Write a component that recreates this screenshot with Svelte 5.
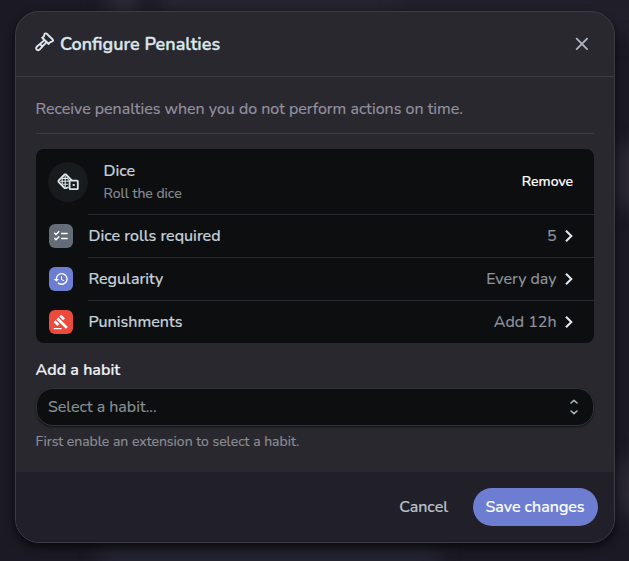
<script>
  const rows = [
    { id: 'rolls', label: 'Dice rolls required', value: '5', tone: '#636c77' },
    { id: 'time', label: 'Regularity', value: 'Every day', tone: '#6d7dd1' },
    { id: 'gavel', label: 'Punishments', value: 'Add 12h', tone: '#eb4b3d' }
  ];
</script>

<main class="backdrop">
  <i class="glow g1"></i><i class="glow g2"></i><i class="glow g3"></i>
  <i class="glow g4"></i><i class="glow g5"></i><i class="glow g6"></i>
  <section class="modal" role="dialog" aria-labelledby="title">
    <header>
      <svg class="hammer" width="20" height="20" viewBox="0 0 20 20" fill="none" stroke="currentColor" stroke-width="1.9" stroke-linejoin="round" stroke-linecap="round">
        <path d="M9.5 2.2Q10.6.8 11.8 1.8L17.7 7.5Q18.7 8.7 17.3 9.3L14.8 10.3 13.7 12 7.2 5.7 8.8 4.6Z" />
        <path d="M8.6 8.9 2 14.5Q.3 16.4 1.9 17.7 3.5 19 5 17.2L10.8 10.9M5.7 12.7l1.8 1.5" />
      </svg>
      <h1 id="title">Configure Penalties</h1>
      <button class="close" aria-label="Close">
        <svg width="14" height="14" viewBox="0 0 14 14" fill="none" stroke="currentColor" stroke-width="1.9"><path d="m1.2 1.2 11.4 11.4M12.6 1.2 1.2 12.6" /></svg>
      </button>
    </header>
    <div class="body">
      <p class="intro">Receive penalties when you do not perform actions on time.</p>
      <div class="card">
        <div class="top">
          <div class="avatar">
            <svg width="22" height="18" viewBox="0 0 22 18" fill="none" stroke="currentColor">
              <path stroke-width="1.8" stroke-linejoin="round" d="M11.5 14 8.9 15.2 7.6 15 1.5 8.9 1.5 7.7 7.6 1.5 8.9 1.5 14.8 7.4" />
              <path stroke-width="1.1" d="M8.2 3v11M2.8 8.3h9M5.2 5.4h6M5.2 11.2h6M5.2 5.4v5.8M11.2 5.4v3" />
              <rect x="12.6" y="7.6" width="8.2" height="8.6" rx=".7" stroke-width="1.8" />
              <path stroke-width="2" d="M15.7 11.9h2" />
            </svg>
          </div>
          <div class="about"><strong>Dice</strong><span>Roll the dice</span></div>
          <button class="remove">Remove</button>
        </div>
        {#each rows as row}
          <div class="row">
            <span class="tile" style:background={row.tone}>
              {#if row.id === 'rolls'}
                <svg width="16" height="16" viewBox="0 0 16 16" fill="none" stroke="currentColor" stroke-width="1.4"><path d="m1.3 4.7 1.7 1.7 3.2-3.2M1.3 10l1.7 1.7 3.2-3.2M8 5.5h6.7M8 10.5h6.7" /></svg>
              {:else if row.id === 'time'}
                <svg width="16" height="16" viewBox="0 0 24 24" fill="currentColor"><path d="M13 3a9 9 0 0 0-9 9H1l3.9 3.9.1.1L9 12H6a7 7 0 1 1 2.1 4.9l-1.4 1.5A9 9 0 1 0 13 3m-1 5v5l4.3 2.5.7-1.2-3.5-2.1V8z" /></svg>
              {:else}
                <svg width="16" height="16" viewBox="0 0 24 24" fill="currentColor"><path d="M1 21h12v2H1zM5.2 8.1l2.9-2.9 14.1 14.2-2.8 2.8zM12.3 1l5.7 5.7-2.9 2.8-5.6-5.7zM3.8 9.5l5.7 5.6-2.8 2.9L1 12.3z" /></svg>
              {/if}
            </span>
            <div class="line">
              <strong>{row.label}</strong>
              <span class="value">{row.value}</span>
              <svg width="10" height="14" viewBox="0 0 10 14" fill="none" stroke="currentColor" stroke-width="2.1"><path d="m2 1.7 5.3 5.3L2 12.3" /></svg>
            </div>
          </div>
        {/each}
      </div>
      <div class="label">Add a habit</div>
      <div class="select">
        <span>Select a habit...</span>
        <svg width="10" height="16" viewBox="0 0 10 16" fill="none" stroke="currentColor" stroke-width="1.6" stroke-linecap="round" stroke-linejoin="round"><path d="m2 4 3-2.6L8 4M2 12l3 2.6L8 12" /></svg>
      </div>
      <p class="hint">First enable an extension to select a habit.</p>
    </div>
    <footer>
      <button class="cancel">Cancel</button>
      <button class="save">Save changes</button>
    </footer>
  </section>
</main>

<style>
  :global(body) { margin: 0; background: #1b1923; }
  * { box-sizing: border-box; }
  .backdrop {
    position: relative; width: 629px; height: 561px; overflow: hidden;
    padding: 11px 14px 18px 15px; background: #1b1923;
    font-family: Nunito, Lato, "Open Sans", sans-serif; font-size: 16px; color: #c6d0da;
    -webkit-text-stroke: .2px currentColor;
  }
  .glow { position: absolute; background: #302e3a; filter: blur(9px); }
  .g1 { left: 108px; top: -10px; width: 32px; height: 20px; }
  .g2 { left: 158px; top: -10px; width: 255px; height: 20px; background: #2a2833; }
  .g3 { left: 400px; top: -12px; width: 260px; height: 50px; background: #211f2a; }
  .g4 { left: 613px; top: 145px; width: 40px; height: 62px; background: #2a2834; }
  .g5 { left: 613px; top: 460px; width: 40px; height: 55px; background: #292732; }
  .g6 { left: 100px; top: 546px; width: 340px; height: 30px; background: #242331; }
  .modal {
    position: relative; display: flex; flex-direction: column; height: 532px; overflow: hidden;
    border: 1px solid #3a3d43; border-radius: 24px; background: #29282e;
    box-shadow: 0 4px 10px rgba(0, 0, 0, .65);
  }
  button { border: 0; padding: 0; background: none; font: inherit; color: inherit; white-space: nowrap; }
  svg { display: block; flex: none; }
  p, h1 { margin: 0; white-space: nowrap; }
  strong { font-weight: 500; white-space: nowrap; }
  header { display: flex; align-items: center; flex: none; height: 65px; padding: 0 25px 0 19px; border-bottom: 1px solid #3d3c42; color: #dce6ec; }
  .hammer { margin-top: -5px; }
  h1 { margin-left: 5px; font-size: 18px; line-height: 26px; font-weight: 600; -webkit-text-stroke: .35px currentColor; }
  .close { margin-left: auto; color: #adb4bd; }
  .body { flex: 1; padding: 20px 20px 0; }
  .intro { height: 37px; line-height: 24px; border-bottom: 1px solid #3d3c42; color: #9390a0; text-indent: -.5px; }
  .card { margin-top: 15px; border-radius: 8px; background: #0c0e0f; overflow: hidden; }
  .top { display: flex; align-items: center; height: 65px; padding: 0 21px 0 12px; }
  .avatar { display: grid; place-items: center; width: 40px; height: 40px; border-radius: 50%; background: #171b1d; color: #dce6ec; }
  .about { display: flex; flex-direction: column; margin-left: 15.5px; }
  .about strong { line-height: 24px; }
  .about span { font-size: 14px; line-height: 21px; color: #878c94; }
  .remove { margin-left: auto; font-size: 14px; font-weight: 500; color: #fff; }
  .row { display: flex; align-items: center; height: 43px; padding-left: 13px; color: #c6d0da; }
  .tile { display: grid; place-items: center; width: 24px; height: 24px; border-radius: 6px; color: #fff; }
  .line { display: flex; flex: 1; align-items: center; align-self: stretch; margin-left: 15px; padding-right: 20px; border-top: 1px solid #27292c; }
  .line strong { text-indent: .5px; }
  .value { margin-left: auto; margin-right: 7.5px; color: #8f949d; }
  .line svg { color: #dce6ec; }
  .label { margin-top: 15px; line-height: 24px; font-weight: 600; color: #eef1f5; text-indent: -.5px; }
  .label, .select, .hint { white-space: nowrap; }
  .select { display: flex; align-items: center; justify-content: space-between; height: 38px; margin-top: 6px; padding: 0 14px 0 11px; border: 1px solid #303439; border-radius: 17px; background: #0c0e0f; color: #868f94; box-shadow: 0 1px 2px #111216; }
  .select svg { color: #abb5bb; }
  .hint { margin-top: 5px; font-size: 14px; line-height: 21px; color: #898c94; text-indent: -.5px; }
  footer { display: flex; align-items: center; justify-content: flex-end; flex: none; height: 70px; padding: 0 16px; background: #211f28; }
  .cancel { margin-right: 25px; color: #b9c2d0; font-weight: 500; }
  .save { width: 125px; height: 38px; border-radius: 19px; background: #6d7dd1; color: #fff; font-weight: 500; text-indent: -1px; }
</style>
